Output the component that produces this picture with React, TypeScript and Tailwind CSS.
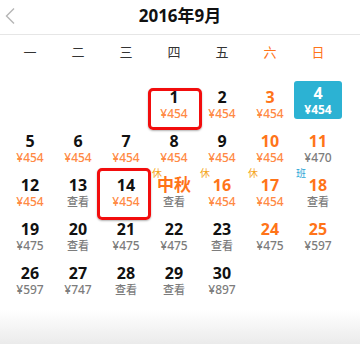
import React from "react";

type Day = {
  d: number;
  price?: string;
  look?: boolean;
  weekend?: boolean;
  label?: string;
  badge?: "休" | "班";
  selected?: boolean;
  grayPrice?: boolean;
};

const days: Day[] = [
  { d: 1, price: "454" },
  { d: 2, price: "454" },
  { d: 3, price: "454", weekend: true },
  { d: 4, price: "454", weekend: true, selected: true },
  { d: 5, price: "454" },
  { d: 6, price: "454" },
  { d: 7, price: "454" },
  { d: 8, price: "454" },
  { d: 9, price: "454" },
  { d: 10, price: "454", weekend: true },
  { d: 11, price: "470", weekend: true, grayPrice: true },
  { d: 12, price: "454" },
  { d: 13, look: true },
  { d: 14, price: "454" },
  { d: 15, look: true, label: "中秋", badge: "休" },
  { d: 16, price: "454", weekend: true, badge: "休" },
  { d: 17, price: "454", weekend: true, badge: "休" },
  { d: 18, look: true, weekend: true, badge: "班" },
  { d: 19, price: "475", grayPrice: true },
  { d: 20, look: true },
  { d: 21, price: "475", grayPrice: true },
  { d: 22, price: "475", grayPrice: true },
  { d: 23, look: true },
  { d: 24, price: "475", weekend: true, grayPrice: true },
  { d: 25, price: "597", weekend: true, grayPrice: true },
  { d: 26, price: "597", grayPrice: true },
  { d: 27, price: "747", grayPrice: true },
  { d: 28, look: true },
  { d: 29, look: true },
  { d: 30, price: "897", grayPrice: true },
];

const weekdays = ["一", "二", "三", "四", "五", "六", "日"];

const DayCell = ({ day }: { day: Day }) => {
  if (day.selected) {
    return (
      <div className="h-[44px] pt-px">
        <div className="h-[38px] rounded-[3px] bg-[#2cb2d3] flex flex-col items-center justify-center text-white">
          <span className="text-[16px] font-bold leading-[18px]">{day.d}</span>
          <span className="text-[12px] font-bold leading-[15px]">¥{day.price}</span>
        </div>
      </div>
    );
  }
  const numColor = day.weekend || day.label ? "text-[#ff7419]" : "text-[#111]";
  return (
    <div className="relative h-[44px] flex flex-col items-center pt-[8px]">
      {day.badge && (
        <span
          className={`absolute top-[-1px] left-[2px] text-[10px] leading-[12px] ${
            day.badge === "休" ? "text-[#f5a623]" : "text-[#2ba6d6]"
          }`}
        >
          {day.badge}
        </span>
      )}
      {day.label ? (
        <span className={`text-[17px] font-bold leading-[18px] ${numColor}`}>{day.label}</span>
      ) : (
        <span className={`text-[16px] font-bold leading-[18px] ${numColor}`}>{day.d}</span>
      )}
      {day.look ? (
        <span className="text-[11px] font-medium leading-[16px] text-[#7d7d7d]">查看</span>
      ) : (
        <span
          className={`text-[12px] font-medium leading-[16px] ${
            day.grayPrice ? "text-[#7d7d7d]" : "text-[#ff8a45]"
          }`}
        >
          ¥{day.price}
        </span>
      )}
      {day.d === 1 && (
        <div className="absolute left-[-2px] top-[8px] w-[54px] h-[42px] border-[3px] border-[#f20d0d] rounded-[5px] shadow-[0_1px_2px_rgba(0,0,0,0.3)]" />
      )}
      {day.d === 14 && (
        <div className="absolute left-[-5px] top-0 w-[54px] h-[52px] border-[3px] border-[#f20d0d] rounded-[5px] shadow-[0_1px_2px_rgba(0,0,0,0.3)]" />
      )}
    </div>
  );
};

export default function App() {
  return (
    <div
      className="w-[360px] h-[344px] bg-white overflow-hidden flex flex-col"
      style={{ fontFamily: '"Noto Sans", "Noto Sans CJK SC", sans-serif' }}
    >
      <div className="relative h-[35px] border-b border-[#e6e6e6] flex items-center justify-center pb-[3px]">
        <svg className="absolute left-[4px] top-[7px]" width="12" height="18" viewBox="0 0 12 18">
          <polyline points="10,1.5 2.5,9 10,16.5" fill="none" stroke="#b5b5b5" strokeWidth="1.4" />
        </svg>
        <span className="text-[17px] font-bold text-[#111]">2016年9月</span>
      </div>
      <div className="px-[6px] grid grid-cols-[repeat(7,48px)] h-[36px] items-center">
        {weekdays.map((w, i) => (
          <span
            key={w}
            className={`text-center text-[13px] ${i >= 5 ? "text-[#ff7419]" : "text-[#333]"}`}
          >
            {w}
          </span>
        ))}
      </div>
      <div className="px-[6px] pt-[9px] grid grid-cols-[repeat(7,48px)]">
        <div className="col-span-3" />
        {days.map((day) => (
          <DayCell key={day.d} day={day} />
        ))}
      </div>
      <div className="flex-1" />
      <div className="h-[34px] bg-gradient-to-b from-white to-[#ebebeb]" />
    </div>
  );
}
